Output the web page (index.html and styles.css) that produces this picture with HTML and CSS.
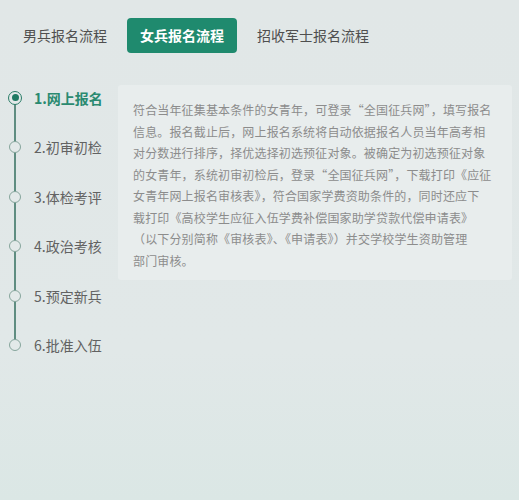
FILE: index.html
```html
<!DOCTYPE html>
<html lang="zh-CN">
<head>
<meta charset="utf-8">
<link rel="stylesheet" href="styles.css">
</head>
<body>
<div class="page">
  <nav class="tabs">
    <div class="tab">男兵报名流程</div>
    <div class="tab active">女兵报名流程</div>
    <div class="tab">招收军士报名流程</div>
  </nav>
  <div class="main">
    <ul class="steps">
      <li class="step current"><span class="dot"></span><span class="label">1.网上报名</span></li>
      <li class="step"><span class="dot"></span><span class="label">2.初审初检</span></li>
      <li class="step"><span class="dot"></span><span class="label">3.体检考评</span></li>
      <li class="step"><span class="dot"></span><span class="label">4.政治考核</span></li>
      <li class="step"><span class="dot"></span><span class="label">5.预定新兵</span></li>
      <li class="step last"><span class="dot"></span><span class="label">6.批准入伍</span></li>
    </ul>
    <div class="card">
      <p class="desc">符合当年征集基本条件的女青年，可登录“全国征兵网”，填写报名<br>信息。报名截止后，网上报名系统将自动依据报名人员当年高考相<br>对分数进行排序，择优选择初选预征对象。被确定为初选预征对象<br>的女青年，系统初审初检后，登录“全国征兵网”，下载打印《应征<br>女青年网上报名审核表》，符合国家学费资助条件的，同时还应下<br>载打印《高校学生应征入伍学费补偿国家助学贷款代偿申请表》<br>（以下分别简称《审核表》、《申请表》）并交学校学生资助管理<br>部门审核。</p>
    </div>
  </div>
</div>
</body>
</html>
```
FILE: styles.css
```css
* { box-sizing: border-box; }
html, body { margin: 0; padding: 0; }
body {
  width: 519px;
  height: 500px;
  overflow: hidden;
  background: linear-gradient(180deg, #e1e7e7 0%, #e1e8e8 70%, #dbe7e5 100%);
  font-family: "Noto Sans CJK SC", "Noto Sans", sans-serif;
}
.page { padding-top: 18px; }
.tabs {
  display: flex;
  gap: 7px;
  padding-left: 10px;
}
.tab {
  height: 35px;
  line-height: 35px;
  padding: 0 13px;
  font-size: 14px;
  color: #4f4f4f;
  border-radius: 4px;
}
.tab.active {
  background: #1f8a6e;
  color: #ffffff;
  font-weight: bold;
}
.main {
  display: flex;
  align-items: flex-start;
  margin-top: 20px;
}
.steps {
  list-style: none;
  margin: 0;
  padding: 0 0 0 9px;
  width: 118px;
  flex: none;
}
.step {
  position: relative;
  display: flex;
  align-items: center;
  gap: 13px;
  height: 49.5px;
}
.step::after {
  content: "";
  position: absolute;
  left: 5.25px;
  top: 50%;
  width: 1.5px;
  height: 49.5px;
  background: #5f8d81;
}
.step.last::after { display: none; }
.dot {
  position: relative;
  z-index: 1;
  width: 12px;
  height: 12px;
  border-radius: 50%;
  border: 1.5px solid #86a59c;
  background: #e3e9e9;
  flex: none;
}
.step.current .dot {
  width: 14px;
  height: 14px;
  margin-left: -1px;
  margin-right: -1px;
  border-color: #2a7d67;
  display: flex;
  align-items: center;
  justify-content: center;
}
.step.current .dot::before {
  content: "";
  width: 7px;
  height: 7px;
  border-radius: 50%;
  background: #1f7a62;
}
.label {
  font-size: 14px;
  color: #626262;
  white-space: nowrap;
}
.step.current .label {
  color: #2a8a70;
  font-weight: bold;
}
.card {
  margin-top: 12px;
  width: 394px;
  background: #e8eded;
  border-radius: 3px;
  padding: 14px 10px 9px 15px;
}
.desc {
  margin: 0;
  font-size: 12px;
  line-height: 21.5px;
  letter-spacing: 0.15px;
  color: #8c8c8c;
  white-space: nowrap;
}
```
